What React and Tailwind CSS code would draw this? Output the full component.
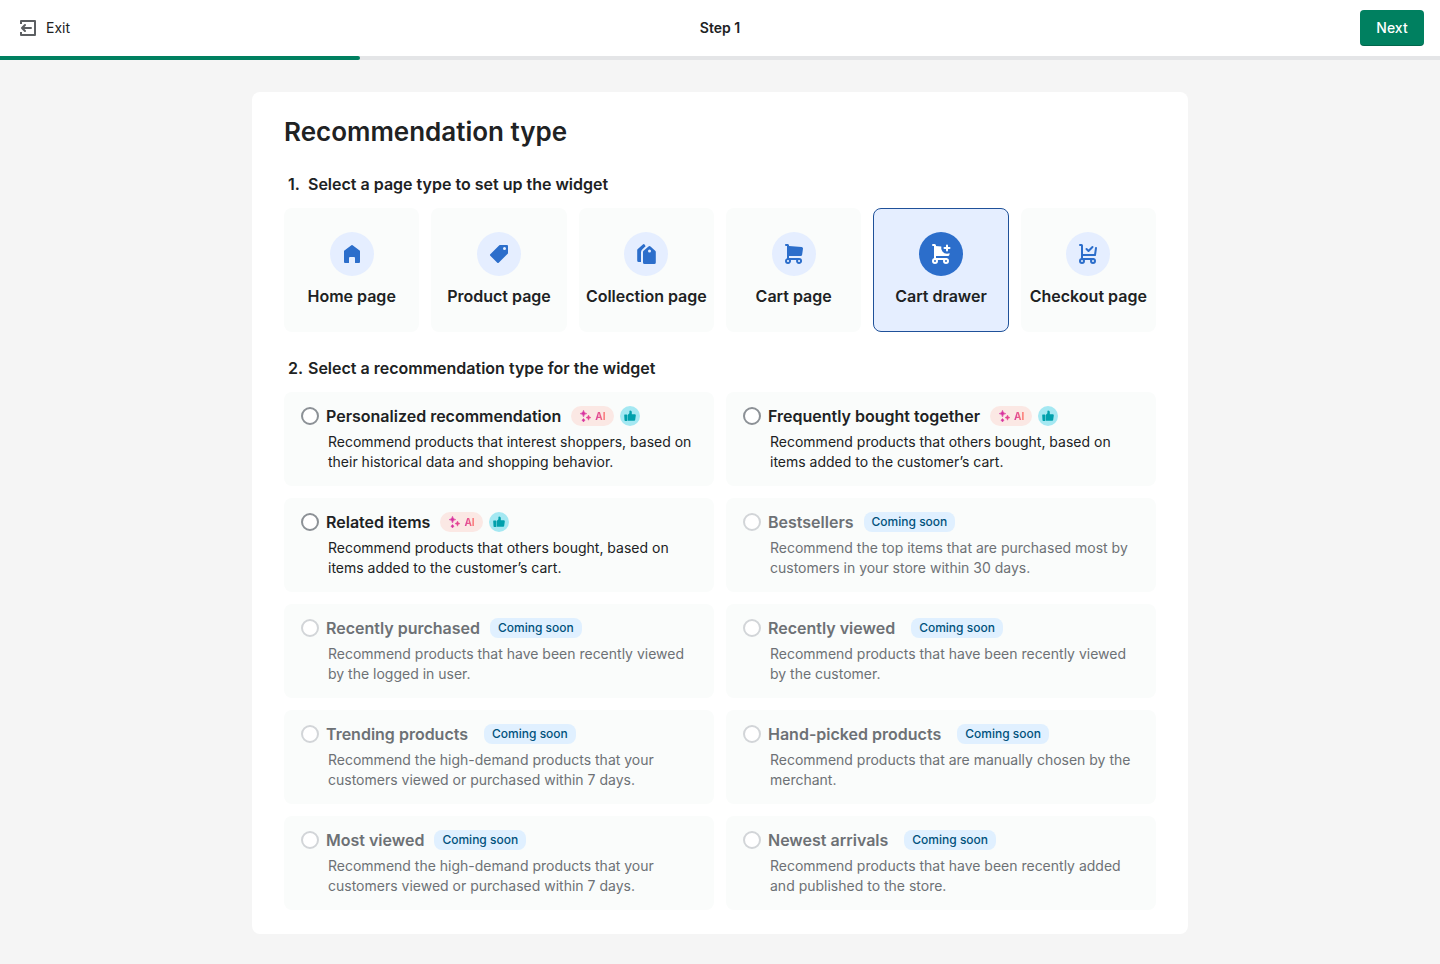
import React, { useState } from "react";
import clsx from "clsx";

const HomeIcon = () => (
  <svg viewBox="0 0 20 20" className="size-5" fill="currentColor" aria-hidden="true">
    <path d="M10.6 1.2a1 1 0 0 0-1.2 0l-7 5.2a1 1 0 0 0-.4.8V18a1 1 0 0 0 1 1h3.5a.5.5 0 0 0 .5-.5V14a1 1 0 0 1 1-1h4a1 1 0 0 1 1 1v4.5a.5.5 0 0 0 .5.5H17a1 1 0 0 0 1-1V7.2a1 1 0 0 0-.4-.8z" />
  </svg>
);

const TagIcon = () => (
  <svg viewBox="0 0 20 20" className="size-5" fill="currentColor" aria-hidden="true">
    <path fillRule="evenodd" d="M10.293 1.293A1 1 0 0 1 11 1h7a1 1 0 0 1 1 1v7a1 1 0 0 1-.293.707l-9 9a1 1 0 0 1-1.414 0l-7-7a1 1 0 0 1 0-1.414l9-9zM15.5 6a1.5 1.5 0 1 0 0-3 1.5 1.5 0 0 0 0 3z" />
  </svg>
);

const CollectionIcon = () => (
  <svg viewBox="0 0 20 20" className="size-5" fill="currentColor" aria-hidden="true">
    <path d="M6.9.4 1.8 4.9a1.6 1.6 0 0 0-.6 1.2v10.4A1.5 1.5 0 0 0 2.7 18H5V8.2c0-1 .4-2 1.2-2.7l3.4-3.2L8.6.5A1.3 1.3 0 0 0 6.9.4z" />
    <path fillRule="evenodd" d="M12.5 2.4a1.5 1.5 0 0 1 2 0l4.7 4.3c.4.4.6.8.6 1.3v10.5a1.5 1.5 0 0 1-1.5 1.5H8.5A1.5 1.5 0 0 1 7 18.5V8c0-.5.2-.9.6-1.3zM13.5 8.500a1.500 1.500 0 1 0 0-3 1.500 1.500 0 0 0 0 3z" />
  </svg>
);

const CartIcon = () => (
  <svg viewBox="0 0 20 20" className="size-5" fill="currentColor" aria-hidden="true">
    <path fillRule="evenodd" d="M1 1c0-.552.45-1 1.004-1h1.505c.831 0 1.505.672 1.505 1.5v.56l12.574.908c.877.055 1.52.843 1.397 1.71l-.866 6.034a1.504 1.504 0 0 1-1.489 1.288H5.013v2h10.043a3.005 3.005 0 0 1 3.011 3c0 1.657-1.348 3-3.01 3a3.005 3.005 0 0 1-2.84-4H6.85a3.005 3.005 0 0 1-2.84 4A3.005 3.005 0 0 1 1 17c0-1.306.838-2.418 2.007-2.83V2h-1.003A1.002 1.002 0 0 1 1 1zm13.053 16c0-.552.449-1 1.003-1 .555 0 1.004.448 1.004 1s-.45 1-1.004 1c-.554 0-1.003-.448-1.003-1zM3.009 17c0-.552.45-1 1.004-1s1.004.448 1.004 1-.45 1-1.004 1-1.004-.448-1.004-1z" />
  </svg>
);

const CartAddIcon = () => (
  <svg viewBox="0 0 20 20" className="size-5" fill="none" stroke="currentColor" strokeWidth="2" strokeLinecap="round" strokeLinejoin="round" aria-hidden="true">
    <path d="M2 1h1.5a.5.5 0 0 1 .5.5V15h11" />
    <path stroke="none" fill="currentColor" d="M4.5 2.06 10.3 2.4A6 6 0 0 0 16 9.7c1 0 1.900-.1 2.700-.4l-.3 1.500A1.500 1.500 0 0 1 17 12H4.500z" />
    <path d="M16 1.500v5M13.500 4h5" />
    <circle cx="4" cy="17" r="2" />
    <circle cx="15" cy="17" r="2" />
  </svg>
);

const CartCheckIcon = () => (
  <svg viewBox="0 0 20 20" className="size-5" fill="none" stroke="currentColor" strokeWidth="2" strokeLinecap="round" strokeLinejoin="round" aria-hidden="true">
    <path d="M2 1h1.5a.5.5 0 0 1 .5.5V15h11" />
    <path d="M4 11h13l1-7" />
    <path d="m8.5 5 2 2 4-4" />
    <circle cx="4" cy="17" r="2" />
    <circle cx="15" cy="17" r="2" />
  </svg>
);

const ExitIcon = () => (
  <svg viewBox="0 0 16 16" className="size-4 text-[#5c5f62]" fill="none" stroke="currentColor" strokeWidth="2" strokeLinejoin="round" aria-hidden="true">
    <path d="M1 4V1h14v14H1v-3" />
    <path strokeLinecap="round" d="M11 8H2.5M5 5 2 8l3 3" />
  </svg>
);

const AiBadge = () => (
  <span className="flex h-5 items-center gap-1 rounded-full bg-[#fbe8e4] px-2">
    <svg viewBox="0 0 12 12" className="size-3" aria-hidden="true">
      <defs>
        <linearGradient id="ai-spark" x1="0" y1="0" x2="1" y2="0">
          <stop offset="0" stopColor="#cf2aa8" />
          <stop offset="1" stopColor="#ec4a8c" />
        </linearGradient>
      </defs>
      <path
        fill="url(#ai-spark)"
        d="M4.500.2Q4.900 3.200 7.900 3.600 4.900 4 4.500 7 4.100 4 1.100 3.600 4.100 3.200 4.500.2zM9.500 5Q9.800 7.300 12 7.600 9.800 7.900 9.500 10.200 9.200 7.900 7 7.600 9.200 7.300 9.500 5zM4.500 8.500 6 10.200 4.500 11.900 3 10.200z"
        stroke="url(#ai-spark)"
        strokeWidth=".5"
      />
    </svg>
    <span className="bg-linear-to-r from-[#d9369f] to-[#ff7a66] bg-clip-text text-[10px] leading-4 font-bold text-transparent">AI</span>
  </span>
);

const ThumbBadge = () => (
  <span className="flex size-5 items-center justify-center rounded-full bg-[#a4e8f2]">
    <svg viewBox="0 0 12 12" className="size-3 text-[#00a0ac]" fill="currentColor" aria-hidden="true">
      <path d="M.8 4.500h1.900a.5.5 0 0 1 .5.5v5.500a.5.5 0 0 1-.5.5H1.300a.8.8 0 0 1-.8-.7L.2 5.200a.6.6 0 0 1 .6-.7zM3.700 5l1.700-1.800V1.300c0-.5.3-.8.8-.8 1 0 1.600.8 1.600 1.700V4.200h2.900c.7 0 1.200.6 1.100 1.300l-.6 4.200c-.1.600-.6 1-1.200 1H3.700z" />
    </svg>
  </span>
);

const pageTypes = [
  { id: "home", label: "Home page", icon: HomeIcon },
  { id: "product", label: "Product page", icon: TagIcon },
  { id: "collection", label: "Collection page", icon: CollectionIcon },
  { id: "cart", label: "Cart page", icon: CartIcon },
  { id: "drawer", label: "Cart drawer", icon: CartAddIcon },
  { id: "checkout", label: "Checkout page", icon: CartCheckIcon },
];

const recommendations = [
  { id: "personalized", title: "Personalized recommendation", text: "Recommend products that interest shoppers, based on their historical data and shopping behavior." },
  { id: "together", title: "Frequently bought together", text: "Recommend products that others bought, based on items added to the customer’s cart." },
  { id: "related", title: "Related items", text: "Recommend products that others bought, based on items added to the customer’s cart." },
  { id: "bestsellers", title: "Bestsellers", text: "Recommend the top items that are purchased most by customers in your store within 30 days.", soon: true },
  { id: "purchased", title: "Recently purchased", text: "Recommend products that have been recently viewed by the logged in user.", soon: true },
  { id: "viewed", title: "Recently viewed", text: "Recommend products that have been recently viewed by the customer.", soon: true, wide: true },
  { id: "trending", title: "Trending products", text: "Recommend the high-demand products that your customers viewed or purchased within 7 days.", soon: true, wide: true },
  { id: "handpicked", title: "Hand-picked products", text: "Recommend products that are manually chosen by the merchant.", soon: true, wide: true },
  { id: "most-viewed", title: "Most viewed", text: "Recommend the high-demand products that your customers viewed or purchased within 7 days.", soon: true },
  { id: "newest", title: "Newest arrivals", text: "Recommend products that have been recently added and published to the store.", soon: true, wide: true },
];

const PageTypeTile = ({ label, icon: Icon, selected, onSelect }) => (
  <button
    type="button"
    aria-pressed={selected}
    onClick={onSelect}
    className={clsx(
      "flex h-[124px] flex-col items-center gap-2 rounded-lg border pt-[23px] text-base leading-6 font-semibold whitespace-nowrap",
      selected ? "border-[#1f5199] bg-[#e5eeff]" : "border-transparent bg-[#fafcfb]"
    )}
  >
    <span
      className={clsx(
        "flex size-11 items-center justify-center rounded-full",
        selected ? "bg-[#2c6ecb] text-white" : "bg-[#e5eeff] text-[#2c6ecb]"
      )}
    >
      <Icon />
    </span>
    {label}
  </button>
);

const RecommendationOption = ({ id, title, text, soon, wide, checked, onSelect }) => (
  <div className={clsx("rounded-lg bg-[#fafcfb] px-4 py-3.5", soon && "text-[#6d7175]")}>
    <div className={clsx("flex h-5 items-center", wide ? "gap-4" : "gap-2.5")}>
      <span className="flex items-center gap-1.5">
        <input
          type="radio"
          name="recommendation"
          id={id}
          checked={checked}
          disabled={soon}
          onChange={onSelect}
          aria-describedby={`${id}-text`}
          className="mx-px size-[18px] shrink-0 appearance-none rounded-full border-2 border-[#8c9196] bg-white checked:border-[5px] checked:border-[#008060] disabled:border-[#d2d5d8]"
        />
        <label htmlFor={id} className="text-base leading-5 font-semibold whitespace-nowrap">{title}</label>
      </span>
      {soon ? (
        <span className="rounded-lg bg-[#e0f0ff] px-2 text-xs leading-5 font-medium whitespace-nowrap text-[#00527c]">Coming soon</span>
      ) : (
        <span className="flex items-center gap-1.5">
          <AiBadge />
          <ThumbBadge />
        </span>
      )}
    </div>
    <p id={`${id}-text`} className="mt-1.5 pl-7 text-sm leading-5">{text}</p>
  </div>
);

const App = () => {
  const [pageType, setPageType] = useState("drawer");
  const [recommendation, setRecommendation] = useState(null);

  return (
    <div className="min-h-screen bg-[#f5f5f5] font-['Inter',sans-serif] text-[#202223]">
      <header>
        <div className="grid h-14 grid-cols-3 items-center bg-white px-4 text-sm leading-5">
          <button type="button" className="flex items-center gap-2.5 justify-self-start pl-1">
            <ExitIcon />
            Exit
          </button>
          <span className="justify-self-center font-semibold">Step 1</span>
          <button type="button" className="h-9 w-16 justify-self-end rounded bg-[#008060] font-medium text-white shadow-[inset_0_-1px_0_rgba(0,0,0,0.2)]">
            Next
          </button>
        </div>
        {/* Wizard progress: first of four steps */}
        <div className="h-1 bg-[#e4e5e7]">
          <div className="h-full w-1/4 rounded-r-sm bg-[#008060]" />
        </div>
      </header>

      <main className="mx-auto max-w-[1000px] px-8 py-8">
        <div className="rounded-lg bg-white px-8 py-6">
          <h1 className="text-[26px] leading-8 font-semibold">Recommendation type</h1>

          <h2 className="mt-6 flex pl-1 text-base leading-6 font-semibold">
            <span className="w-5">1.</span>
            Select a page type to set up the widget
          </h2>
          <div className="mt-3 grid grid-cols-3 gap-3 lg:grid-cols-6">
            {pageTypes.map((type) => (
              <PageTypeTile
                key={type.id}
                label={type.label}
                icon={type.icon}
                selected={pageType === type.id}
                onSelect={() => setPageType(type.id)}
              />
            ))}
          </div>

          <h2 className="mt-6 flex pl-1 text-base leading-6 font-semibold">
            <span className="w-5">2.</span>
            Select a recommendation type for the widget
          </h2>
          <div className="mt-3 grid grid-cols-1 gap-3 md:grid-cols-2">
            {recommendations.map((item) => (
              <RecommendationOption
                key={item.id}
                {...item}
                checked={recommendation === item.id}
                onSelect={() => setRecommendation(item.id)}
              />
            ))}
          </div>
        </div>
      </main>
    </div>
  );
};

export default App;
